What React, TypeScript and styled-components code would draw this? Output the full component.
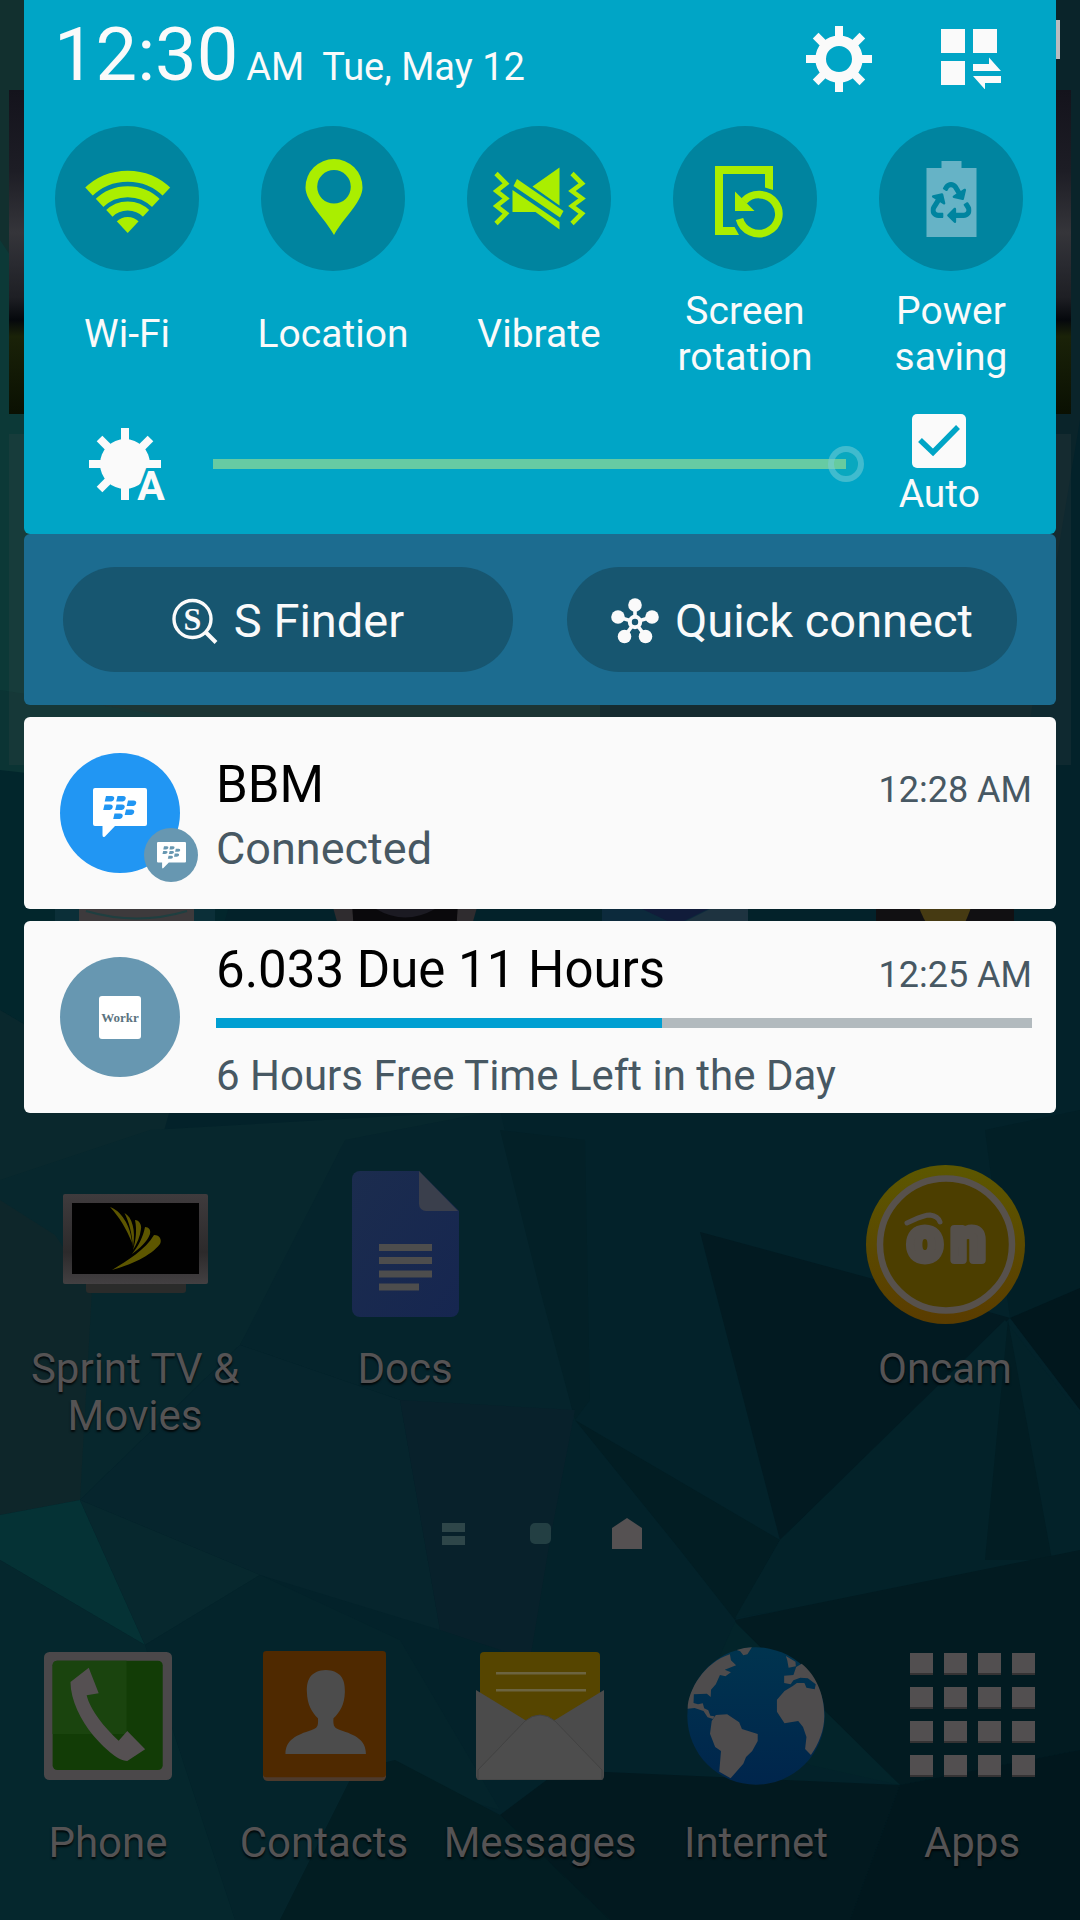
import React, { useState } from "react";
import styled, { createGlobalStyle } from "styled-components";
import { FaRecycle } from "react-icons/fa";

const color = {
  panel: "#00a5c6",
  disc: "#00849f",
  lime: "#aaee00",
  bar: "#1c6c90",
  pill: "#175670",
  paper: "#fafafa",
  slate: "#475863",
  dim: "#555354",
};

const GlobalStyle = createGlobalStyle`
  * { box-sizing: border-box; }
  body {
    margin: 0;
    background: #03222a;
    font-family: Roboto, "Noto Sans", "Liberation Sans", sans-serif;
  }
  button {
    font: inherit;
    color: inherit;
    background: none;
    border: 0;
    padding: 0;
    cursor: pointer;
  }
  svg { display: block; flex: none; text-shadow: none; }
`;

const Screen = styled.div`
  position: relative;
  isolation: isolate;
  display: grid;
  grid-template-columns: minmax(0, 1fr);
  min-height: 100vh;
  overflow: hidden;
`;

const WallpaperArt = styled.svg`
  position: absolute;
  inset: 0;
  width: 100%;
  height: 100%;
  z-index: -1;
`;

const Home = styled.div`
  grid-area: 1 / 1;
  display: flex;
  flex-direction: column;
`;

const StatusBar = styled.div`
  display: flex;
  justify-content: flex-end;
  height: 90px;
  padding: 20px 20px 0;
`;

const Battery = styled.div`
  width: 28px;
  height: 39px;
  background: #b9bcc0;
`;

const PhotoWidget = styled.div`
  height: 324px;
  margin: 0 9px 20px;
  background: linear-gradient(
    180deg,
    #14131c 0%,
    #1d1d25 25%,
    #35353a 44%,
    #292a30 54%,
    #1e1f24 64%,
    #05080c 71%,
    #1a2208 76%,
    #0a1002 100%
  );
`;

const ListWidget = styled.div`
  height: 331px;
  margin: 0 9px;
  background: rgba(80, 80, 80, 0.16);
`;

const HiddenRow = styled.div`
  display: grid;
  grid-template-columns: repeat(4, 1fr);
  justify-items: center;
  height: 398px;
  padding-top: 27px;
`;

const AppRow = styled.div`
  display: grid;
  grid-template-columns: repeat(4, 1fr);
`;

const Dock = styled.nav`
  display: grid;
  grid-template-columns: repeat(5, 1fr);
  margin-top: auto;
  padding: 98px 0 54px;
`;

const AppButton = styled.button<{ $slot: number; $gap: number; $column?: number }>`
  display: grid;
  grid-template-rows: ${(p) => p.$slot}px auto;
  row-gap: ${(p) => p.$gap}px;
  align-items: center;
  align-content: start;
  justify-items: center;
  grid-column: ${(p) => p.$column ?? "auto"};
  font-size: 42px;
  line-height: 47px;
  color: ${color.dim};
  text-shadow: 0 2px 2px rgba(0, 0, 0, 0.8);
`;

const Pages = styled.div`
  display: flex;
  justify-content: center;
  align-items: center;
  gap: 57px;
  height: 31px;
  margin-top: 79px;
`;

const Shade = styled.main`
  grid-area: 1 / 1;
  position: relative;
  align-self: start;
  display: flex;
  flex-direction: column;
  gap: 12px;
  padding: 0 24px;
`;

const QuickPanel = styled.section`
  background: ${color.panel};
  color: ${color.paper};
  border-radius: 0 0 6px 6px;
`;

const Header = styled.header`
  display: flex;
  justify-content: space-between;
  height: 126px;
  padding: 9px 55px 0 30px;
`;

const Clock = styled.div`
  display: flex;
  align-items: baseline;
  line-height: 92px;
  white-space: nowrap;
`;

const Time = styled.span`
  font-size: 74px;
`;

const Meridiem = styled.span`
  margin-left: 8px;
  font-size: 38px;
`;

const DateText = styled.span`
  margin-left: 18px;
  font-size: 38px;
`;

const Actions = styled.div`
  display: flex;
  align-items: center;
  gap: 69px;
  height: 100px;
`;

const Tiles = styled.div`
  display: grid;
  grid-template-columns: repeat(5, 1fr);
  padding-right: 2px;
`;

const Tile = styled.button`
  display: flex;
  flex-direction: column;
  align-items: center;
  gap: 17px;
`;

const Disc = styled.span`
  display: block;
  width: 144px;
  height: 145px;
  border-radius: 50%;
  background: ${color.disc};
`;

const TileLabel = styled.span`
  display: flex;
  align-items: center;
  width: min-content;
  height: 92px;
  font-size: 39px;
  line-height: 46px;
`;

const BrightnessRow = styled.div`
  display: flex;
  align-items: center;
  padding: 34px 76px 19px 65px;
`;

const Slider = styled.input`
  appearance: none;
  flex: 1;
  min-width: 0;
  height: 36px;
  margin: 0 35px 2px 42px;
  background: linear-gradient(#66cba3, #66cba3) 0 50% / calc(100% - 18px) 10px no-repeat;

  &::-webkit-slider-thumb {
    appearance: none;
    width: 36px;
    height: 36px;
    border: 6px solid rgba(120, 205, 222, 0.5);
    border-radius: 50%;
    background: rgba(120, 200, 120, 0.08);
  }
`;

const AutoLabel = styled.label`
  display: grid;
  justify-items: center;
  row-gap: 5px;
  font-size: 39px;
  line-height: 42px;
`;

const Tick = styled.input`
  appearance: none;
  grid-area: 1 / 1;
  width: 54px;
  height: 54px;
  margin: 0;
  border-radius: 5px;
  background: ${color.paper};

  &:not(:checked) + svg {
    display: none;
  }
`;

const TickMark = styled.svg`
  grid-area: 1 / 1;
  pointer-events: none;
`;

const ToolBar = styled.section`
  display: grid;
  grid-template-columns: 1fr 1fr;
  gap: 54px;
  padding: 33px 39px;
  border-radius: 6px;
  background: ${color.bar};
`;

const Pill = styled.button`
  display: flex;
  align-items: center;
  justify-content: center;
  gap: 16px;
  height: 105px;
  padding-top: 2px;
  border-radius: 53px;
  background: ${color.pill};
  color: ${color.paper};
  font-size: 47px;
`;

const Notice = styled.article`
  display: flex;
  gap: 36px;
  height: 192px;
  padding: 36px 24px 0 36px;
  border-radius: 6px;
  background: ${color.paper};
  color: ${color.slate};
`;

const NoticeIcon = styled.div<{ $fill: string }>`
  position: relative;
  flex: none;
  display: grid;
  place-items: center;
  width: 120px;
  height: 120px;
  border-radius: 50%;
  background: ${(p) => p.$fill};
`;

const Badge = styled.div`
  position: absolute;
  right: -18px;
  bottom: -9px;
  display: grid;
  place-items: center;
  width: 54px;
  height: 54px;
  border-radius: 50%;
  background: #6797b1;
`;

const WorkrLogo = styled.div`
  width: 42px;
  border-radius: 3px;
  background: #ffffff;
  color: #5b7380;
  font: bold 13px / 43px "Liberation Serif", serif;
  text-align: center;
`;

const NoticeBody = styled.div<{ $wide?: boolean }>`
  flex: 1;
  min-width: 0;
  margin-top: ${(p) => (p.$wide ? -17 : 2)}px;
`;

const NoticeHead = styled.div`
  display: flex;
  align-items: baseline;
  justify-content: space-between;
  line-height: 60px;
`;

const Title = styled.h2`
  margin: 0;
  font-size: 51px;
  font-weight: 400;
  color: #000000;
`;

const Stamp = styled.time`
  font-size: 36px;
`;

const Detail = styled.p<{ $size: number }>`
  margin: 0;
  font-size: ${(p) => p.$size}px;
  line-height: 58px;
`;

const Progress = styled.progress`
  appearance: none;
  display: block;
  width: 100%;
  height: 10px;
  margin: 13px 0 19px;
  border: 0;

  &::-webkit-progress-bar {
    background: #b2babe;
  }
  &::-webkit-progress-value {
    background: #009fd2;
  }
`;

const facets: [string, string][] = [
  ["0,0 620,0 600,760 0,900", "#12302f"],
  ["1080,0 1080,420 1000,900 600,800 600,0", "#0a242a"],
  ["0,240 120,420 60,690 0,760", "#0c3937"],
  ["0,690 330,740 150,900 0,850", "#0b3434"],
  ["0,770 260,800 170,1110 0,1010", "#02262c"],
  ["0,1010 170,1110 150,1180 40,1240 0,1180", "#0a282d"],
  ["0,1180 150,1130 500,1110 345,1180 240,1345 80,1500 0,1515", "#07272d"],
  ["0,1200 55,1235 92,1290 80,1500 0,1515", "#0e262a"],
  ["240,1345 345,1140 500,1110 540,1280 575,1420 400,1400", "#05242c"],
  ["500,1130 540,1290 575,1420 590,1400 585,1140", "#032027"],
  ["80,1500 240,1345 400,1400 440,1630 260,1575", "#06252d"],
  ["400,1400 575,1410 550,1540 530,1660 440,1630", "#08212b"],
  ["575,1420 780,1540 735,1620 680,1550", "#021d23"],
  ["985,1130 1080,1110 1080,1290 1010,1318", "#021f26"],
  ["700,1232 866,1277 1010,1318 780,1540", "#021a21"],
  ["1010,1318 1080,1288 1080,1410", "#01171d"],
  ["1005,1320 1080,1415 1080,1560 735,1618 780,1540", "#032229"],
  ["1008,1320 1052,1560 985,1560", "#021d23"],
  ["735,1620 1080,1550 1080,1750 900,1785 740,1640", "#021b21"],
  ["735,1622 900,1785 810,1765 700,1700", "#03242a"],
  ["0,1515 80,1500 145,1645 0,1560", "#053235"],
  ["80,1500 260,1575 145,1645", "#07282e"],
  ["145,1645 260,1575 400,1640 500,1810 355,1770 280,1920 235,1920", "#04242b"],
  ["0,1560 145,1645 235,1920 0,1920", "#05272d"],
  ["355,1770 395,1760 500,1815 610,1920 280,1920", "#021d22"],
  ["500,1815 560,1770 900,1785 850,1920 610,1920", "#02191f"],
  ["900,1785 1080,1750 1080,1920 850,1920", "#01171d"],
];

function Wallpaper() {
  return (
    <WallpaperArt viewBox="0 0 1080 1920" preserveAspectRatio="none" aria-hidden="true">
      <rect width="1080" height="1920" fill="#03222a" />
      {facets.map(([points, fill]) => (
        <polygon key={points} points={points} fill={fill} />
      ))}
    </WallpaperArt>
  );
}

const spokes = [0, 45, 90, 135, 180, 225, 270, 315];

function GearIcon() {
  return (
    <svg width="66" height="66" viewBox="-33 -33 66 66" aria-hidden="true">
      {spokes.map((a) => (
        <rect key={a} x="-4" y="-33" width="8" height="14" fill={color.paper} transform={`rotate(${a})`} />
      ))}
      <circle r="18.3" fill="none" stroke={color.paper} strokeWidth="10.6" />
    </svg>
  );
}

function EditTilesIcon() {
  return (
    <svg width="60" height="60" viewBox="0 0 60 60" fill={color.paper} aria-hidden="true">
      <path d="M0 0h24v24H0zM32 0h24v24H32zM0 32h24v24H0zM32 35h16v-6.500L60 42H32zM60 47v7H44v6.500L32 47z" />
    </svg>
  );
}

function WifiIcon() {
  return (
    <svg width="144" height="145" viewBox="54 126 144 145" aria-hidden="true">
      <clipPath id="fan">
        <path d="M126.700 233L81 184V160H172.400V184z" />
      </clipPath>
      <g clipPath="url(#fan)" fill="none" stroke={color.lime}>
        <circle cx="126.700" cy="233" r="56.700" strokeWidth="11" />
        <circle cx="126.700" cy="233" r="41.300" strokeWidth="11" />
        <circle cx="126.700" cy="233" r="27" strokeWidth="9.200" />
        <circle cx="126.700" cy="233" r="8" strokeWidth="16" />
      </g>
    </svg>
  );
}

function PinIcon() {
  return (
    <svg width="144" height="145" viewBox="260.500 126 144 145" aria-hidden="true">
      <path
        fill={color.lime}
        fillRule="evenodd"
        d="M333.500 235C325 219 305 202 305 187.500A28.500 28.500 0 0 1 362 187.500C362 202 342 219 333.500 235zM333.500 170a16.800 16.800 0 1 0 0 33.600a16.800 16.800 0 0 0 0-33.600z"
      />
    </svg>
  );
}

function VibrateIcon() {
  return (
    <svg width="144" height="145" viewBox="466.500 126 144 145" aria-hidden="true">
      <path
        fill={color.lime}
        d="M559 167.500V205.500L532 186.500zM512 190L559 222V229.500L535 212H512zM516.500 179L563 211L559.500 217.500L513 186z"
      />
      <path
        fill="none"
        stroke={color.lime}
        strokeWidth="4.600"
        d="M495.500 173.500L505.500 183.500L496 191L505.500 198.500L496 206L505.500 213.500L495.500 223.500M571.500 173.500L581.500 183.500L571.500 191L581.500 198.500L571.500 206L581.500 213.500L571.500 223.500"
      />
    </svg>
  );
}

function RotationIcon() {
  return (
    <svg width="144" height="145" viewBox="673 126 144 145" aria-hidden="true">
      <path fill={color.lime} d="M715 166H773V190L765 187.500V174H723V227H734.500L739 235H715z" />
      <path fill="none" stroke={color.lime} strokeWidth="7.600" d="M739.500 219A20 19.500 0 1 0 744 201" />
      <path fill={color.lime} d="M735 191.500V211H754.500z" />
    </svg>
  );
}

function PowerIcon() {
  return (
    <svg width="144" height="145" viewBox="879.500 126 144 145" aria-hidden="true">
      <path fill="#66b3c6" d="M942 161H962V168H977V237H927V168H942z" />
      <FaRecycle x="931" y="182" size="41" color={color.disc} />
    </svg>
  );
}

function BrightnessIcon() {
  return (
    <svg width="82" height="90" viewBox="-36 -44 82 90" aria-hidden="true">
      <g fill={color.paper}>
        {spokes
          .filter((a) => a !== 135)
          .map((a) => (
            <rect key={a} x="-4" y="-36" width="8" height="16" transform={`rotate(${a})`} />
          ))}
        <circle r="25" />
      </g>
      <text
        x="26"
        y="36"
        textAnchor="middle"
        fontSize="41"
        fontWeight="700"
        fill={color.paper}
        stroke={color.panel}
        strokeWidth="6"
        paintOrder="stroke"
      >
        A
      </text>
    </svg>
  );
}

function FinderIcon() {
  return (
    <svg width="46" height="46" viewBox="0 0 46 46" aria-hidden="true">
      <circle cx="20.500" cy="21" r="18.500" fill="none" stroke={color.paper} strokeWidth="3.400" />
      <path d="M34 34.500L44 44.500" stroke={color.paper} strokeWidth="4" />
      <text
        x="20.500"
        y="31.500"
        textAnchor="middle"
        fontFamily="Liberation Serif, serif"
        fontWeight="700"
        fontSize="32"
        fill={color.paper}
      >
        S
      </text>
    </svg>
  );
}

const nodes: [number, number][] = [
  [24, 7],
  [7, 19],
  [41, 19],
  [13.5, 38.5],
  [34.5, 38.5],
];

function ConnectIcon() {
  return (
    <svg width="48" height="46" viewBox="0 0 48 46" aria-hidden="true">
      {nodes.map(([x, y]) => (
        <g key={`${x}-${y}`}>
          <line x1="24" y1="24" x2={x} y2={y} stroke={color.paper} strokeWidth="3.600" />
          <circle cx={x} cy={y} r="6.800" fill={color.paper} />
        </g>
      ))}
      <circle cx="24" cy="24" r="5.200" fill={color.pill} stroke={color.paper} strokeWidth="4" />
    </svg>
  );
}

const berries: [number, number][] = [
  [13, 8],
  [24.500, 8],
  [11.500, 16.500],
  [23.500, 16.500],
  [35, 12.500],
  [33, 21.500],
  [21.500, 25.500],
];

function BubbleIcon({ width, ink }: { width: number; ink: string }) {
  return (
    <svg width={width} height={Math.round((width * 50) / 54)} viewBox="0 0 54 50" aria-hidden="true">
      <path
        fill="#ffffff"
        d="M2 0H52a2 2 0 0 1 2 2V36a2 2 0 0 1-2 2H22L12 48.500Q9.500 50 9.500 47V38H2a2 2 0 0 1-2-2V2a2 2 0 0 1 2-2z"
      />
      {berries.map(([x, y]) => (
        <path key={`${x}-${y}`} fill={ink} d={`M${x} ${y}h5.500q3.500.3 2.600 3q-.8 2.600-4.500 2.600h-4.900z`} />
      ))}
    </svg>
  );
}

function TvIcon() {
  return (
    <svg width="146" height="100" viewBox="62 1194 146 100" aria-hidden="true">
      <linearGradient id="frame" x1="0" y1="0" x2="0" y2="1">
        <stop offset="0" stopColor="#3f3b3d" />
        <stop offset=".65" stopColor="#2c2a2b" />
        <stop offset="1" stopColor="#434042" />
      </linearGradient>
      <rect x="86" y="1280" width="100" height="13" rx="3" fill="#2a2b2a" />
      <rect x="63" y="1194" width="145" height="90" rx="2" fill="url(#frame)" />
      <rect x="72" y="1203" width="127" height="71" fill="#010101" />
      <g fill="#5d5600">
        <path d="M110 1207C120 1210 131 1225 132 1243C126 1228 120 1218 110 1207z" />
        <path d="M124.500 1213C132 1217 136 1230 133 1247C132 1233 129 1222 124.500 1213z" />
        <path d="M135 1220C139 1220 142 1225 141 1229C140 1237 137 1243 133 1250C136 1240 137 1230 135 1220z" />
        <path d="M145 1227C149 1227 151 1230 150 1234C147 1242 140 1248 132 1254C139 1245 143 1237 145 1227z" />
        <path d="M154 1235C160 1235 162 1240 160 1244C151 1256 130 1265 112 1270C128 1260 145 1250 154 1235z" />
      </g>
    </svg>
  );
}

function DocsIcon() {
  return (
    <svg width="107" height="147" viewBox="0 0 107 147" aria-hidden="true">
      <linearGradient id="sheet" x1="0" y1="0" x2="1" y2="1">
        <stop offset="0" stopColor="#1b2c4e" />
        <stop offset="1" stopColor="#162650" />
      </linearGradient>
      <path fill="url(#sheet)" d="M8 0H67L107 40V138a8 8 0 0 1-8 8H8a8 8 0 0 1-8-8V8a8 8 0 0 1 8-8z" />
      <path fill="#3a3f4c" d="M67 0L106 40H74a7 7 0 0 1-7-7z" />
      <path fill="#4d4d4d" d="M27 73H80V80H27zM27 86H80V93H27zM27 99.500H80V106.500H27zM27 112.500H67V119.500H27z" />
    </svg>
  );
}

function OncamIcon() {
  return (
    <svg width="159" height="159" viewBox="0 0 159 159" aria-hidden="true">
      <linearGradient id="coin" x1="0" y1="0" x2="0" y2="1">
        <stop offset="0" stopColor="#5c5700" />
        <stop offset="1" stopColor="#5a3c00" />
      </linearGradient>
      <circle cx="79.500" cy="79.500" r="79.500" fill="url(#coin)" />
      <circle cx="80" cy="79.500" r="66" fill="#4c3e00" stroke="#57514c" strokeWidth="6.500" />
      <path d="M41 58C50 54 57 50 64 50Q72 51 74 57" fill="none" stroke="#55504b" strokeWidth="5" strokeLinecap="round" />
      <g
        fontSize="60"
        fontWeight="700"
        textAnchor="middle"
        fill="#55504b"
        stroke="#55504b"
        strokeWidth="8"
        strokeLinejoin="round"
      >
        <text x="59" y="95">o</text>
        <text x="102" y="95">n</text>
      </g>
    </svg>
  );
}

function PhoneIcon() {
  return (
    <svg width="128" height="128" viewBox="128 306 372 384" preserveAspectRatio="none" aria-hidden="true">
      <rect x="128" y="306" width="372" height="384" rx="16" fill="#4b484a" />
      <rect x="153" y="332" width="320" height="328" rx="14" fill="#123c06" />
      <path d="M153 346Q153 332 167 332H368V552H153z" fill="#1a440e" />
      <path
        fill="#555052"
        d="M258 353L287 430L252 436C262 480 305 535 345 572L370 543L422 598L370 633C340 632 300 590 270 555C235 510 205 450 205 396z"
      />
    </svg>
  );
}

function ContactsIcon() {
  return (
    <svg width="123" height="130" viewBox="762 303 356 390" preserveAspectRatio="none" aria-hidden="true">
      <rect x="762" y="310" width="356" height="383" rx="14" fill="#4d3a2c" />
      <rect x="762" y="303" width="356" height="379" rx="10" fill="#4f2900" />
      <path
        fill="#4c4c4c"
        d="M944 360C985 362 1000 385 999 425C998 465 985 485 966 505C964 530 970 535 985 540C1030 555 1060 570 1060 612H827C827 570 858 555 903 540C918 535 923 530 921 505C903 485 890 465 889 425C888 385 903 362 944 360z"
      />
    </svg>
  );
}

function MessagesIcon() {
  return (
    <svg width="128" height="128" viewBox="476 1652 128 128" aria-hidden="true">
      <rect x="480" y="1652" width="120" height="80" rx="4" fill="#564500" />
      <path fill="#6c6440" d="M496 1672H586V1674.500H496zM496 1689H586V1691.500H496z" />
      <path fill="#4b4b4b" d="M476 1690L525 1720L540 1735L555 1720L604 1690V1776a4 4 0 0 1-4 4H480a4 4 0 0 1-4-4z" />
      <path fill="#4d4d4d" stroke="#424242" d="M478 1770L525 1721Q540 1709 555 1721L602 1770V1780H478z" />
    </svg>
  );
}

function GlobeIcon() {
  return (
    <svg width="138" height="138" viewBox="428 290 402 414" preserveAspectRatio="none" aria-hidden="true">
      <linearGradient id="sea" x1="0" y1="0" x2="0" y2="1">
        <stop offset="0" stopColor="#00344f" />
        <stop offset="1" stopColor="#00254c" />
      </linearGradient>
      <ellipse cx="629" cy="497" rx="200" ry="206" fill="url(#sea)" />
      <g fill="#4e4c4d">
        <path d="M553 312L556 330L571 345L538 358L556 366L540 378L524 374L512 402L498 418L497 440L486 430L448 432L447 458L460 462L474 459L478 474L490 480L496 496L508 498L504 506L488 501L476 482L450 473L430 475C430 420 480 335 553 312z" />
        <path d="M573 299Q595 292 617 291L604 312L592 315L583 303z" />
        <path d="M512 494L545 492L580 516L588 536L634 551L634 572L618 602L600 620L592 640L555 684L522 664L527 602L510 590L495 550L500 512z" />
        <path d="M716 317L744 334L745 348L724 352L720 330zM762 340C800 370 829 430 828 497C828 540 812 580 789 614L772 596L776 560L766 530L752 512L712 519L690 484L690 448L712 422L735 408L748 398L770 398L776 412L800 417L803 402L780 384L758 382L738 390L730 402L711 398L711 376L738 374L746 350z" />
      </g>
    </svg>
  );
}

function AppsIcon() {
  const steps = [0, 1, 2, 3];
  return (
    <svg width="126" height="128" viewBox="0 0 126 128" aria-hidden="true">
      {steps.map((r) =>
        steps.map((c) => (
          <g key={`${r}${c}`}>
            <rect x={c * 34 + 1} y={r * 34 + 3} width="23" height="20" fill="#353334" />
            <rect x={c * 34 + 1} y={r * 34 + 1} width="23" height="20" fill="#524f50" />
          </g>
        )),
      )}
    </svg>
  );
}

function HiddenApps() {
  return (
    <HiddenRow aria-hidden="true">
      <svg width="160" height="140" viewBox="0 0 160 140">
        <rect width="160" height="140" fill="#0b2f38" />
        <rect x="24" width="115" height="140" fill="#3d3a3c" />
        <path d="M31 119Q82 134 132 119" fill="none" stroke="#1f3f40" strokeWidth="2" />
      </svg>
      <svg width="146" height="140" viewBox="0 0 146 140">
        <path d="M0 112H146L138 140H8z" fill="#2f2c2f" />
        <path d="M20 112H126L124 140H22z" fill="#0a090c" />
        <path d="M44 117Q73 134 103 117z" fill="#1b1a22" />
      </svg>
      <svg width="146" height="140" viewBox="0 0 146 140">
        <rect width="146" height="140" fill="#0c2a3c" />
        <path d="M80 131L110 116H146V140H80z" fill="#1e3340" />
        <path d="M38 116H108L74 133z" fill="#111c3a" />
      </svg>
      <svg width="138" height="140" viewBox="0 0 138 140">
        <rect width="138" height="140" fill="#111012" />
        <path d="M42 112H96Q92 126 84 140H56Q46 126 42 112z" fill="#463a12" />
      </svg>
    </HiddenRow>
  );
}

const tiles = [
  { label: "Wi\u2011Fi", icon: <WifiIcon />, on: true },
  { label: "Location", icon: <PinIcon />, on: true },
  { label: "Vibrate", icon: <VibrateIcon />, on: true },
  { label: "Screen rotation", icon: <RotationIcon />, on: true },
  { label: "Power saving", icon: <PowerIcon />, on: false },
];

const dockApps = [
  { label: "Phone", icon: <PhoneIcon /> },
  { label: "Contacts", icon: <ContactsIcon /> },
  { label: "Messages", icon: <MessagesIcon /> },
  { label: "Internet", icon: <GlobeIcon /> },
  { label: "Apps", icon: <AppsIcon /> },
];

const homeApps = [
  { label: "Sprint TV & Movies", icon: <TvIcon />, column: 1 },
  { label: "Docs", icon: <DocsIcon />, column: 2 },
  { label: "Oncam", icon: <OncamIcon />, column: 4 },
];

export default function App() {
  const [level, setLevel] = useState(100);
  const [auto, setAuto] = useState(true);

  return (
    <Screen>
      <GlobalStyle />
      <Wallpaper />
      <Home>
        <StatusBar>
          <Battery />
        </StatusBar>
        <PhotoWidget />
        <ListWidget />
        <HiddenApps />
        <AppRow>
          {homeApps.map((app) => (
            <AppButton key={app.label} $slot={162} $gap={20} $column={app.column}>
              {app.icon}
              <span>{app.label}</span>
            </AppButton>
          ))}
        </AppRow>
        <Pages>
          <svg width="30" height="24" viewBox="0 0 30 24" aria-hidden="true">
            <path d="M4 1H27V10H4zM4 14H27V23H4z" fill="#2e4649" />
          </svg>
          <svg width="30" height="22" viewBox="0 0 30 22" aria-hidden="true">
            <rect x="5" width="21" height="21" rx="5" fill="#233f43" />
          </svg>
          <svg width="30" height="31" viewBox="0 0 30 31" aria-hidden="true">
            <path d="M15 0L30 10V31H0V10z" fill="#555152" />
          </svg>
        </Pages>
        <Dock>
          {dockApps.map((app) => (
            <AppButton key={app.label} $slot={138} $gap={34}>
              {app.icon}
              <span>{app.label}</span>
            </AppButton>
          ))}
        </Dock>
      </Home>

      <Shade>
        <div>
          <QuickPanel>
            <Header>
              <Clock>
                <Time>12:30</Time>
                <Meridiem>AM</Meridiem>
                <DateText>Tue, May 12</DateText>
              </Clock>
              <Actions>
                <button aria-label="Settings">
                  <GearIcon />
                </button>
                <button aria-label="Edit quick settings">
                  <EditTilesIcon />
                </button>
              </Actions>
            </Header>
            <Tiles>
              {tiles.map((tile) => (
                <Tile key={tile.label} aria-pressed={tile.on}>
                  <Disc>{tile.icon}</Disc>
                  <TileLabel>{tile.label}</TileLabel>
                </Tile>
              ))}
            </Tiles>
            <BrightnessRow>
              <BrightnessIcon />
              <Slider
                type="range"
                aria-label="Brightness"
                value={level}
                onChange={(e) => setLevel(Number(e.target.value))}
              />
              <AutoLabel>
                <Tick type="checkbox" checked={auto} onChange={(e) => setAuto(e.target.checked)} />
                <TickMark width="54" height="54" viewBox="0 0 54 54" aria-hidden="true">
                  <path d="M8 26L21 38.500L46 13" fill="none" stroke={color.panel} strokeWidth="5.500" />
                </TickMark>
                <span>Auto</span>
              </AutoLabel>
            </BrightnessRow>
          </QuickPanel>
          <ToolBar>
            <Pill>
              <FinderIcon />
              <span>S Finder</span>
            </Pill>
            <Pill>
              <ConnectIcon />
              <span>Quick connect</span>
            </Pill>
          </ToolBar>
        </div>

        <Notice>
          <NoticeIcon $fill="#2196f3">
            <BubbleIcon width={54} ink="#2196f3" />
            <Badge>
              <BubbleIcon width={29} ink="#6797b1" />
            </Badge>
          </NoticeIcon>
          <NoticeBody>
            <NoticeHead>
              <Title>BBM</Title>
              <Stamp>12:28 AM</Stamp>
            </NoticeHead>
            <Detail $size={45}>Connected</Detail>
          </NoticeBody>
        </Notice>

        <Notice>
          <NoticeIcon $fill="#6797b1">
            <WorkrLogo>Workr</WorkrLogo>
          </NoticeIcon>
          <NoticeBody $wide>
            <NoticeHead>
              <Title>6.033 Due 11 Hours</Title>
              <Stamp>12:25 AM</Stamp>
            </NoticeHead>
            <Progress value={446} max={816} aria-label="Time used" />
            <Detail $size={42}>6 Hours Free Time Left in the Day</Detail>
          </NoticeBody>
        </Notice>
      </Shade>
    </Screen>
  );
}
